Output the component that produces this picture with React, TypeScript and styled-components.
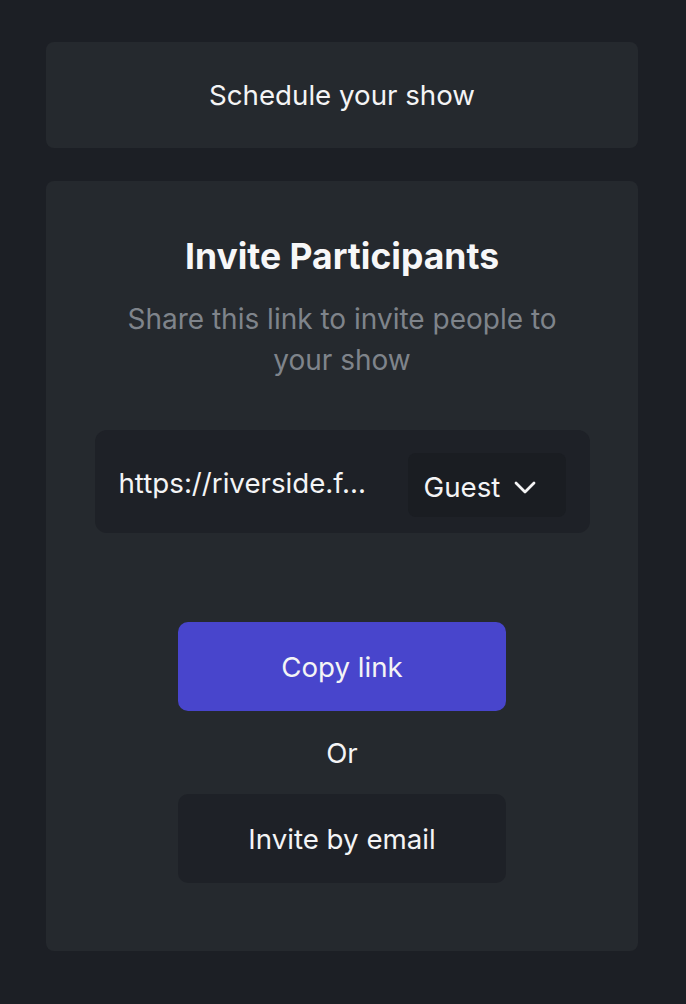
import React from "react";
import styled, { createGlobalStyle } from "styled-components";

const Global = createGlobalStyle`
  html, body { margin: 0; padding: 0; background: #1c1f25; }
  body { font-family: Inter, "Noto Sans", sans-serif; color: #f4f4f5; -webkit-font-smoothing: antialiased; }
  * { box-sizing: border-box; }
`;

const Page = styled.div`
  display: flex;
  flex-direction: column;
  gap: 33px;
  padding: 42px 48px 53px 46px;
  min-height: 1004px;
`;

const Card = styled.div`
  background: #25292e;
  border-radius: 8px;
`;

const ScheduleCard = styled(Card)`
  height: 106px;
  display: flex;
  align-items: center;
  justify-content: center;
  font-size: 27.7px;
  color: #f4f4f5;
`;

const InviteCard = styled(Card)`
  display: flex;
  flex-direction: column;
  align-items: center;
  padding: 56px 48px 68px;
`;

const Title = styled.h2`
  margin: 0;
  font-size: 35.5px;
  font-weight: 700;
  line-height: 40px;
  color: #f7f7f8;
`;

const Subtitle = styled.p`
  margin: 22px 0 0;
  font-size: 28px;
  line-height: 41px;
  color: #7f848b;
  text-align: center;
  max-width: 450px;
`;

const LinkBox = styled.div`
  margin-top: 49px;
  width: 495px;
  height: 103px;
  background: #1e2127;
  border-radius: 12px;
  display: flex;
  align-items: center;
  justify-content: space-between;
  padding: 0 24px;
`;

const Url = styled.span`
  font-size: 27.7px;
  color: #f4f4f5;
  white-space: nowrap;
  padding-top: 3px;
`;

const RoleSelect = styled.button`
  height: 64px;
  width: 158px;
  margin-top: 7px;
  background: #1a1d22;
  border: none;
  border-radius: 8px;
  color: #f4f4f5;
  font-family: inherit;
  font-size: 27.7px;
  display: flex;
  align-items: center;
  gap: 13px;
  padding: 3px 16px 0;
`;

const Actions = styled.div`
  margin-top: 89px;
  display: flex;
  flex-direction: column;
  align-items: center;
  width: 328px;
`;

const ActionButton = styled.button<{ $primary?: boolean }>`
  width: 328px;
  height: 89px;
  border: none;
  border-radius: 10px;
  background: ${(p) => (p.$primary ? "#4845cc" : "#1e2127")};
  color: #f4f4f5;
  font-family: inherit;
  font-size: 27.7px;
`;

const Or = styled.div`
  font-size: 27.7px;
  line-height: 34px;
  margin: 25px 0 24px;
  color: #f4f4f5;
`;

const Chevron = () => (
  <svg width="24" height="24" viewBox="0 0 24 24" fill="none" stroke="#f4f4f5" strokeWidth="2.8" strokeLinecap="round" strokeLinejoin="round">
    <path d="M3 8l9 9 9-9" />
  </svg>
);

export default function App() {
  return (
    <>
      <Global />
      <Page>
        <ScheduleCard>Schedule your show</ScheduleCard>
        <InviteCard>
          <Title>Invite Participants</Title>
          <Subtitle>Share this link to invite people to your show</Subtitle>
          <LinkBox>
            <Url>https://riverside.f...</Url>
            <RoleSelect>
              Guest
              <Chevron />
            </RoleSelect>
          </LinkBox>
          <Actions>
            <ActionButton $primary>Copy link</ActionButton>
            <Or>Or</Or>
            <ActionButton>Invite by email</ActionButton>
          </Actions>
        </InviteCard>
      </Page>
    </>
  );
}
